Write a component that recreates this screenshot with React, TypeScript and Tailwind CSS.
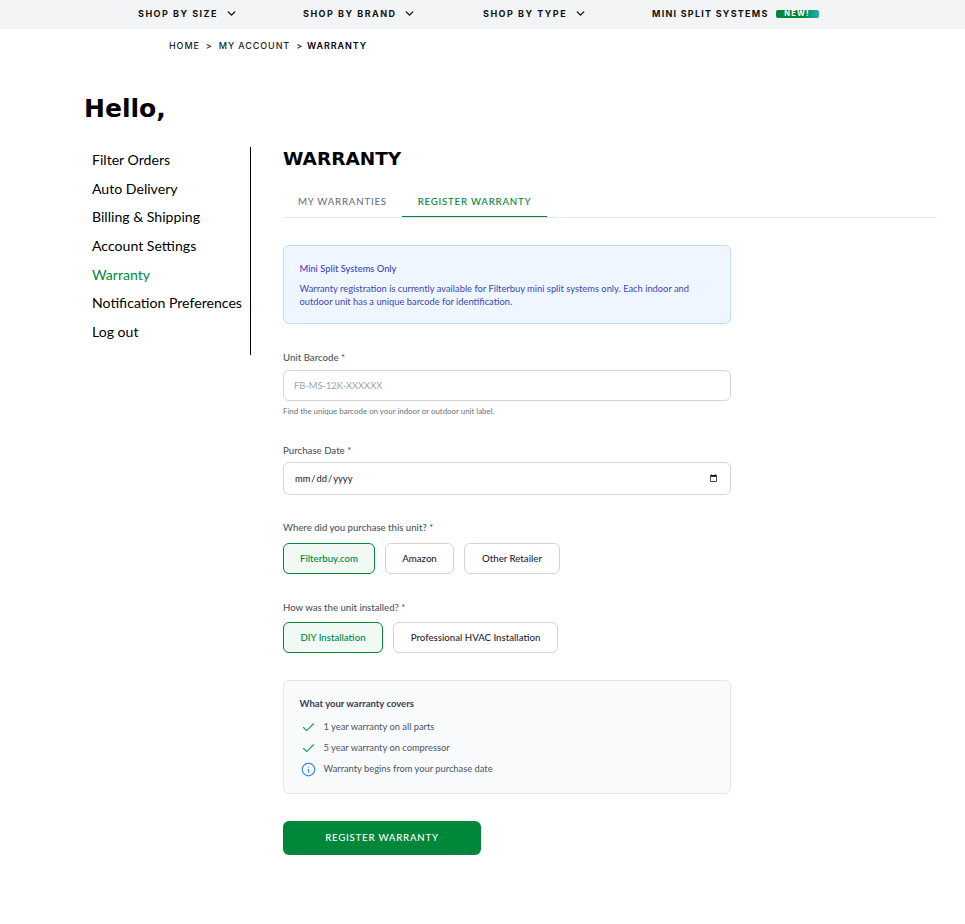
import React from "react";
import { ChevronDown, Check, Info } from "lucide-react";

const display = "font-['Inter','Liberation_Sans',sans-serif]";
const heading = "font-['DejaVu_Sans',sans-serif]";

function NavItem({ label, className }: { label: string; className: string }) {
  return (
    <div className={`flex items-center ${className}`}>
      <span className={`${display} text-[9px] leading-[12px] font-bold tracking-[1.5px] text-[#111]`}>{label}</span>
      <ChevronDown className="ml-[6.5px] h-[13px] w-[13px] text-[#111]" strokeWidth={2.5} />
    </div>
  );
}

function Choice({ label, active, className }: { label: string; active?: boolean; className: string }) {
  return (
    <button
      className={`h-[31px] rounded-[6px] border text-[9.67px] font-medium ${className} ${
        active ? "border-[#00873a] bg-[#f0f9f4] text-[#00873a]" : "border-[#d1d5db] bg-white text-[#1f2937]"
      }`}
    >
      {label}
    </button>
  );
}

export default function App() {
  const nav = ["Filter Orders", "Auto Delivery", "Billing & Shipping", "Account Settings", "Warranty", "Notification Preferences", "Log out"];
  return (
    <div className="min-h-[924px] bg-white font-['Lato',sans-serif] text-black">
      <div className="flex h-[29px] items-center bg-[#f3f4f6] pb-[2px] pl-[138px]">
        <NavItem label="SHOP BY SIZE" className="w-[165px]" />
        <NavItem label="SHOP BY BRAND" className="w-[180px]" />
        <NavItem label="SHOP BY TYPE" className="w-[169px]" />
        <span className={`${display} text-[9px] leading-[12px] font-bold tracking-[1.25px] text-[#111]`}>MINI SPLIT SYSTEMS</span>
        <span className={`${display} ml-[7px] flex h-[8px] w-[43px] items-center justify-center rounded-[2px] bg-gradient-to-r from-[#00873a] from-60% to-[#26a9b5] text-[7.5px] leading-none font-bold tracking-[1.2px] text-white`}>
          NEW!
        </span>
      </div>

      <div className={`${display} flex h-[33px] items-center pl-[169px] text-[9px] font-medium tracking-[0.9px] text-[#222]`}>
        <span>HOME</span>
        <span className="ml-[6px]">&gt;</span>
        <span className="ml-[6px]">MY ACCOUNT</span>
        <span className="ml-[6px]">&gt;</span>
        <span className="ml-[4px] font-semibold text-black">WARRANTY</span>
      </div>

      <h1 className={`${heading} mt-[30px] pl-[84px] text-[25px] leading-[34px] font-bold`}>Hello,</h1>

      <div className="mt-[21px] flex">
        <div className="ml-[92px] flex h-[208px] w-[159px] flex-col border-r border-black pt-[3px]">
          {nav.map((n) => (
            <a key={n} className={`h-[28.67px] text-[14.1px] leading-[20px] whitespace-nowrap ${n === "Warranty" ? "text-[#00873a]" : "text-black"}`}>
              {n}
            </a>
          ))}
        </div>

        <div className="ml-[32px] w-[654px]">
          <h2 className={`${heading} text-[18.5px] leading-[24px] font-bold`}>WARRANTY</h2>
          <div className="mt-[16px] flex h-[31px] border-b border-[#e5e7eb] text-[9.67px] tracking-[0.78px]">
            <div className="w-[119px] pl-[15px] leading-[28px] font-medium text-[#6b7280]">MY WARRANTIES</div>
            <div className="h-[30px] w-[145px] border-b border-[#00873a] text-center leading-[28px] font-medium text-[#00873a]">REGISTER WARRANTY</div>
          </div>

          <div className="mt-[27px] w-[448px]">
            <div className="h-[79px] rounded-[6px] border border-[#bfdbfe] bg-[#eff6ff] px-[15.5px] pt-[16px] text-[#3b46b8]">
              <p className="text-[9.33px] leading-[14px] font-medium">Mini Split Systems Only</p>
              <p className="mt-[6px] text-[9.33px] leading-[13px]">
                Warranty registration is currently available for Filterbuy mini split systems only. Each indoor and outdoor unit has a unique barcode for identification.
              </p>
            </div>

            <label className="mt-[27px] block text-[9.67px] leading-[13px] font-medium text-[#4b5563]">Unit Barcode *</label>
            <input
              placeholder="FB-MS-12K-XXXXXX"
              className="mt-[6px] block h-[31px] w-full rounded-[6px] border border-[#d1d5db] px-[10px] text-[9.33px] placeholder:text-[#9ca3af]"
            />
            <p className="mt-[5px] text-[7.9px] leading-[10px] text-[#6b7280]">Find the unique barcode on your indoor or outdoor unit label.</p>

            <label className="mt-[28px] block text-[9.67px] leading-[13px] font-medium text-[#4b5563]">Purchase Date *</label>
            <input type="date" className="mt-[5px] block h-[33px] w-full rounded-[6px] border border-[#d1d5db] px-[10px] text-[9.33px] text-[#111827]" />

            <p className="mt-[26px] text-[9.6px] leading-[13px] font-medium text-[#4b5563]">Where did you purchase this unit? *</p>
            <div className="mt-[9px] flex gap-[10px]">
              <Choice label="Filterbuy.com" active className="w-[92px]" />
              <Choice label="Amazon" className="w-[69px]" />
              <Choice label="Other Retailer" className="w-[96px]" />
            </div>

            <p className="mt-[27px] text-[9.6px] leading-[13px] font-medium text-[#4b5563]">How was the unit installed? *</p>
            <div className="mt-[8px] flex gap-[10px]">
              <Choice label="DIY Installation" active className="w-[100px]" />
              <Choice label="Professional HVAC Installation" className="w-[165px]" />
            </div>

            <div className="mt-[27px] h-[114px] rounded-[6px] border border-[#e5e7eb] bg-[#f9fafb] px-[15.5px] pt-[16px]">
              <p className="text-[9.5px] leading-[14px] font-bold text-[#374151]">What your warranty covers</p>
              <ul className="mt-[9px] flex flex-col gap-[7px] pl-[1px] text-[9.33px] text-[#4b5563]">
                <li className="flex h-[14px] items-center gap-[8px]">
                  <Check className="h-[15px] w-[15px] text-[#16a34a]" strokeWidth={1.75} />
                  1 year warranty on all parts
                </li>
                <li className="flex h-[14px] items-center gap-[8px]">
                  <Check className="h-[15px] w-[15px] text-[#16a34a]" strokeWidth={1.75} />
                  5 year warranty on compressor
                </li>
                <li className="flex h-[14px] items-center gap-[8px]">
                  <Info className="h-[15px] w-[15px] text-[#3b82f6]" strokeWidth={2} />
                  Warranty begins from your purchase date
                </li>
              </ul>
            </div>

            <button className="mt-[27px] h-[34px] w-[198px] rounded-[6px] bg-[#00873a] pb-[1px] text-[9.67px] font-medium tracking-[0.78px] text-white">
              REGISTER WARRANTY
            </button>
          </div>
        </div>
      </div>
    </div>
  );
}
